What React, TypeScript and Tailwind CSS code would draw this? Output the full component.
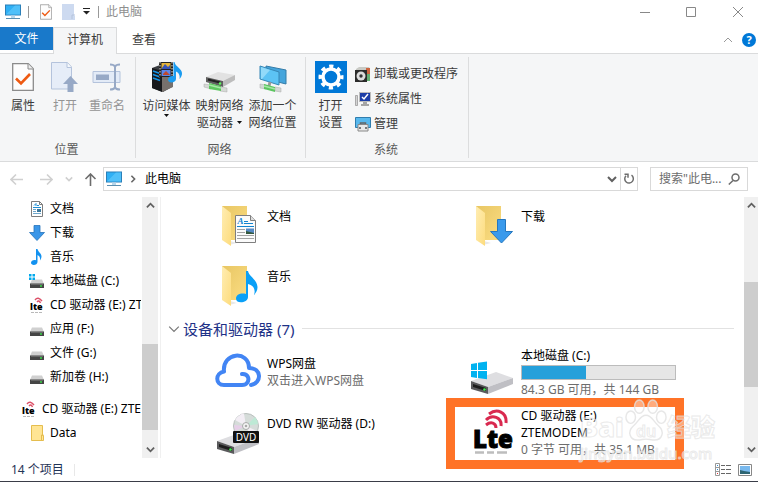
import React from 'react';

type IconProps = { className?: string };

const MonitorIcon: React.FC<IconProps> = ({ className }) => (
  <svg className={className} width="16" height="16" viewBox="0 0 16 16">
    <rect x="0.5" y="1" width="15" height="10" fill="#2fb0f5" stroke="#2b7fb8" />
    <path d="M1 10.5 10 1.5h5v9z" fill="#5cc8fb" opacity="0.7" />
    <path d="M6 11.5h4V14H6z" fill="#b9d7ea" />
    <path d="M1 14.5h14" stroke="#5c8fb0" />
  </svg>
);

const PageCheckIcon: React.FC<IconProps> = ({ className }) => (
  <svg className={className} viewBox="0 0 22 28">
    <path d="M.7.7h15.6l5 5v21.6H.7z" fill="#fdfdfd" stroke="#8b8b8b" strokeWidth="1.3" />
    <path d="M16 .7v5.3h5.3" fill="#eee" stroke="#8b8b8b" />
    <path d="m4 15.500 5 5 9-9.500" fill="none" stroke="#ee5a12" strokeWidth="2.600" />
  </svg>
);

const PageOpenIcon = () => (
  <svg width="28" height="30" viewBox="0 0 28 30">
    <path d="M.5.500h16l4 4.500v22H.5z" fill="#e6edf8" stroke="#b4c3dc" />
    <path d="M16 .5v5h4.500" fill="#f5f8fc" stroke="#b4c3dc" />
    <path d="m19.500 14 7.500 8h-4.500v8h-6v-8H12z" fill="#97a9c6" />
  </svg>
);

const RenameIcon = () => (
  <svg width="30" height="28" viewBox="0 0 30 28">
    <path d="M1 8.500h27v11H1z" fill="#e3ebf7" stroke="#b4c3dc" />
    <path d="M4 11.500h13v5.500H4z" fill="#97a9c6" />
    <path d="M23 2v24M18 1.500q4 0 5 2 1-2 5-2M18 26.500q4 0 5-2 1 2 5 2" fill="none" stroke="#97a9c6" strokeWidth="2" />
  </svg>
);

const MediaServerIcon = () => (
  <svg width="32" height="32" viewBox="0 0 32 32">
    <path d="m1 7 8-3 12 3v19l-9 5-11-4z" fill="#3a3d42" />
    <path d="m11 10 11-3v19l-11 5z" fill="#77716d" />
    <path d="m1 7 10 3v21L1 27z" fill="#17191c" />
    <path d="m2 10 7 2.500M2 13.500 9 16M2 17l7 2.500" stroke="#1593e6" strokeWidth="1.500" />
    <path d="M8 1h14v15H8z" fill="#222" />
    <path d="M10.500 2h9v6h-9z" fill="#e5b53a" />
    <path d="m11 7 3-4 3 3 2-2v4h-8z" fill="#3754b8" />
    <path d="M10.500 9h9v6h-9z" fill="#5b86e8" />
    <path d="m12 13 3-3 4 4h-7z" fill="#c0482c" />
    <path d="M9 1v15M21 1v15" stroke="#ddd" strokeDasharray="1.500 1.500" />
    <path d="M23.500 1c1 5 7 6 7.500 11 .3 2-1 4.500-2.500 6 .8-4-1-6.500-3.500-7.500V18c0 4-8 5-8 .5 0-3 3-4 5.500-3.500V1z" fill="#1a9cf0" />
  </svg>
);

const NetDriveIcon = () => (
  <svg width="34" height="32" viewBox="0 0 34 32">
    <path d="m3 16 12-5 17 3-10 6z" fill="#e2e2e2" />
    <path d="m3 16 17 4v6L3 21z" fill="#606060" />
    <path d="m20 20 12-6v5l-12 7z" fill="#bdbdbd" />
    <path d="m5 18.500 12 3" stroke="#222" strokeWidth="2" />
    <circle cx="17" cy="22.500" r="1.200" fill="#5dff5d" />
    <path d="m1 23 7 1v4l-7-2zM17 26l7 1v4l-7-1z" fill="#d5d9d5" stroke="#aaa" strokeWidth=".5" />
    <path d="m6 22 12 3v5L6 28z" fill="#5ec760" />
    <path d="m6 24 12 3" stroke="#a5e8a5" strokeWidth="1.500" />
  </svg>
);

const NetPlaceIcon = () => (
  <svg width="30" height="32" viewBox="0 0 30 32">
    <path d="m8 5 20 4v14L8 18z" fill="#45a5dc" stroke="#357ca8" />
    <path d="m2 5 19 6v13L2 18z" fill="#5cc3f4" stroke="#3787b5" />
    <path d="m3 6 9 3-8 9H3z" fill="#92daf9" />
    <path d="m12 21-1 4" stroke="#999" strokeWidth="3" />
    <path d="m2 23 6 1v4l-6-1zM17 26l6 1v4l-6-1z" fill="#d3d8d5" stroke="#aaa" strokeWidth=".5" />
    <path d="m6 23 11 3v5L6 28z" fill="#5cc560" />
    <path d="m6 25 11 3" stroke="#a5e8a5" strokeWidth="1.500" />
  </svg>
);

const GearIcon = () => (
  <svg width="32" height="32" viewBox="0 0 32 32">
    <path d="M0 0h32v32H0z" fill="#0078d7" />
    <circle cx="16" cy="16" r="8" fill="none" stroke="#fff" strokeWidth="3.500" />
    <circle cx="16" cy="16" r="10.500" fill="none" stroke="#fff" strokeWidth="4" strokeDasharray="4.120 4.120" strokeDashoffset="2.060" />
  </svg>
);

const UninstallIcon = () => (
  <svg width="16" height="16" viewBox="0 0 16 16">
    <path d="M1 3 4 1h10l1 2v12H1z" fill="#c9cac5" />
    <path d="M11 2h4v6h-4z" fill="#ce6540" />
    <path d="M12 8h3v7h-3z" fill="#65ae72" />
    <path d="M0 4h12v12H0z" fill="#2b2b2b" />
    <circle cx="6" cy="10" r="4.500" fill="#ddd" />
    <circle cx="6" cy="10" r="1.700" fill="#333" />
  </svg>
);

const SystemIcon = () => (
  <svg width="16" height="16" viewBox="0 0 16 16">
    <path d="M.5 4.500h2v10h-2z" fill="#d4d4d4" stroke="#909090" strokeWidth=".7" />
    <path d="M4 1h12v10H4z" fill="#bbb" />
    <path d="M5 2h10v8H5z" fill="#1b3ea8" />
    <path d="m7 6 2 2 4-5" fill="none" stroke="#fff" strokeWidth="1.500" />
    <path d="M8 11h4v2h2v2H6v-2h2z" fill="#a5a5a5" />
  </svg>
);

const ManageIcon = () => (
  <svg width="16" height="16" viewBox="0 0 16 16">
    <path d="M.5 1.500h15v10H.5z" fill="#57b8ed" stroke="#2f7dae" />
    <path d="M5.500 9V7h5v2" fill="none" stroke="#666" strokeWidth="1.500" />
    <path d="M3 8.500h10V15H3z" fill="#e9e9e9" stroke="#888" />
    <path d="M5 11v2M11 11v2" stroke="#555" strokeWidth="1.500" />
  </svg>
);

const DocIcon = () => (
  <svg width="16" height="16" viewBox="0 0 16 16">
    <path d="M2.500.5h8l3 3v12h-11z" fill="#fff" stroke="#7d7d7d" />
    <path d="M10.500.5v3h3" fill="none" stroke="#7d7d7d" />
    <path d="M4 6.500h8M5 4.500l2-2v2.500M8 4.500h2" fill="none" stroke="#1d8fd5" />
    <path d="M4 8.500h3M4 10.500h3M4 12.500h8" stroke="#6fa7cc" />
    <path d="M8 8h4v3H8z" fill="#39779c" />
  </svg>
);

const DownIcon = () => (
  <svg width="16" height="16" viewBox="0 0 16 16">
    <path d="M5 .5h6v7h4.500L8 15.500.5 7.500H5z" fill="#3a96e8" stroke="#2673bb" strokeWidth=".8" />
  </svg>
);

const NoteIcon = () => (
  <svg width="16" height="16" viewBox="0 0 16 16">
    <path d="M7 0h1.500c.5 3 4 4 4 7.500 0 1.500-.8 3-1.500 4 .5-3-.5-4.500-2.500-5.500V13c0 3.500-6.500 4-6.500.8 0-2 2.500-3.300 5-2.500z" fill="#1292f0" />
  </svg>
);

const DriveIcon: React.FC<{ windows?: boolean }> = ({ windows }) => (
  <svg width="16" height="16" viewBox="0 0 16 16">
    <path d="M3 6.500h10l2 4.500H1z" fill="#d0d0d0" />
    <path d="M1 10.500h14V15H1z" fill="#454545" />
    <path d="M2 11.500h12" stroke="#666" />
    <circle cx="12" cy="13" r=".9" fill="#38e948" />
    {windows && <path d="M0 1h2.500v2.500H0zM3.500 1H6v2.500H3.500zM0 4.500h2.500V7H0zM3.500 4.500H6V7H3.500z" fill="#00a8ec" />}
  </svg>
);

const SmallLteIcon = () => (
  <svg width="16" height="16" viewBox="0 0 16 16">
    <path d="M6 3q3-4 7 1M8 5q2-2.500 3.500 1" fill="none" stroke="#dc5068" strokeWidth="1.400" />
    <text x="1" y="13" className="fill-black font-black text-[9px]">lte</text>
    <path d="M2 15.500h11" stroke="#b9b9b9" strokeDasharray="3 1" />
  </svg>
);

const SmallFolderIcon = () => (
  <svg width="16" height="16" viewBox="0 0 16 16">
    <path d="M2.500.5h11v10h1v5h-12z" fill="#ffe594" stroke="#e5bd4e" />
    <path d="M12.500 15v-5h2" fill="none" stroke="#e5bd4e" />
  </svg>
);

const FolderIcon: React.FC<{ kind: 'doc' | 'down' | 'music' }> = ({ kind }) => (
  <svg width="48" height="48" viewBox="0 0 48 48">
    <defs>
      <linearGradient id="back" x1="0" x2="1" y1="0" y2="1">
        <stop offset="0" stopColor="#e8c663" />
        <stop offset="1" stopColor="#fbdd83" />
      </linearGradient>
      <linearGradient id="flap" x1="0" x2="1" y1="0" y2="1">
        <stop offset="0" stopColor="#ffedb3" />
        <stop offset="1" stopColor="#fddc7d" />
      </linearGradient>
    </defs>
    <path d="M14 44l8-2-7-2z" fill="#e8e8e8" />
    <path d="M7 5h25v34H7z" fill="url(#back)" />
    <path d="m7 5 9 7v33l-9-6z" fill="url(#flap)" />
    {kind === 'doc' && (
      <>
        <path d="M20.500 14.500h15l5 5v22h-20z" fill="#fbfbfb" stroke="#7f7f7f" />
        <path d="M35.500 14.500v5h5" fill="#ddd" stroke="#7f7f7f" />
        <text x="22.500" y="23" className="fill-[#1384d0] font-['Liberation_Serif'] text-[9px] font-bold italic">A</text>
        <path d="M29 20.500h4M29 22.500h9M22 25.500h17" stroke="#1384d0" />
        <path d="M22 28.500h8M22 31.500h8M22 34.500h17M22 37.500h17" stroke="#a3a3a3" />
        <path d="M31 27.500h8v5.500h-8z" fill="#5589c5" />
        <path d="M31 33v-3l8 2v1z" fill="#34583e" />
      </>
    )}
    {kind === 'down' && <path d="M28.500 18.500h8v12h7L32.500 42l-11-11.500h7z" fill="#3a9aec" stroke="#2577bf" />}
    {kind === 'music' && (
      <path d="M31 10h2c1 6 9 8 9.500 16 .1 3-1.500 6-3.500 8 2-6-1-10-6-11v13c0 6-12 7.500-12 1.500 0-4 5-6 10-4.500z" fill="#0aa0f7" />
    )}
  </svg>
);

const CloudIcon = () => (
  <svg width="48" height="48" viewBox="0 0 48 48">
    <path
      d="M27 26c6-.5 8 5 5 9-1 1.500-3 2-5 2H9C0 37 0 25 9 23.500 7 4 34 2 34 20c13 0 13 15 2 17"
      fill="none"
      stroke="#4285f4"
      strokeWidth="4"
      strokeLinecap="round"
      strokeLinejoin="round"
    />
  </svg>
);

const BigDriveBody = () => (
  <>
    <path d="m2 33 25-9 17 6-25 9z" fill="#dedee1" />
    <path d="m2 33 17 6v7L2 41z" fill="#5a5a5c" />
    <path d="m19 39 25-9v6l-25 10z" fill="#bfbfc4" />
    <path d="m4 36 13 4v3L4 39z" fill="#1c1c1c" />
    <circle cx="15.500" cy="41.500" r="1.300" fill="#3df04e" />
  </>
);

const DvdIcon = () => (
  <svg width="48" height="48" viewBox="0 0 48 48">
    <BigDriveBody />
    <circle cx="31" cy="18" r="12.500" fill="#d5dcd9" stroke="#b9bfbd" />
    <path d="M31 18 20 12q4-6 9-6.500zM31 18l11 5q-3 5-6 6z" fill="#f3eef5" />
    <path d="m31 18 9-9q3 4 3 7z" fill="#bde9d5" />
    <path d="m31 18-11 5-1-6z" fill="#e6cfe8" />
    <circle cx="31" cy="18" r="3.500" fill="#f5f5f5" stroke="#aaa" />
    <circle cx="31" cy="18" r="1.300" fill="#aaa" />
    <rect x="18" y="23" width="26" height="12" rx="1" fill="#111" />
    <text x="31" y="32.500" textAnchor="middle" className="fill-white text-[10px]">DVD</text>
  </svg>
);

const LocalDiskIcon = () => (
  <svg width="48" height="48" viewBox="0 0 48 48">
    <BigDriveBody />
    <path d="m2 16 6-1v7H2zM9 14.800l9-1.300V22H9zM2 23h6v7l-6-1zM9 23h9v8.300L9 30z" fill="#00b2f0" />
  </svg>
);

const LteIcon = () => (
  <svg width="48" height="48" viewBox="0 0 48 48">
    <path d="M20 6c8-6 18-2 17 9M17 12c6-6 16-3 15 6M17 17c5-4 10-2 10 3" fill="none" stroke="#d9294f" strokeWidth="3" />
    <text x="4" y="40" className="fill-black stroke-black stroke-1 font-['Open_Sans'] font-black text-[24px]">Lte</text>
    <path d="M6 44.500h9M18 44.500h7M28 44.500h10" stroke="#bdbdbd" strokeWidth="2.500" />
  </svg>
);

const Chevron: React.FC<{ dir: 'up' | 'down' | 'right'; className?: string }> = ({ dir, className }) => {
  const paths = { up: 'm1 7 4-4 4 4', down: 'm1 3 4 4 4-4', right: 'm3 1 4 4-4 4' };
  return (
    <svg className={className} width="10" height="10" viewBox="0 0 10 10" fill="none" stroke="currentColor">
      <path d={paths[dir]} />
    </svg>
  );
};

const Caret = () => (
  <svg width="5" height="3" viewBox="0 0 5 3" className="inline-block">
    <path d="M0 0h5L2.500 3z" fill="#111" />
  </svg>
);

const ArrowIcon: React.FC<IconProps> = ({ className }) => (
  <svg className={className} width="13" height="13" viewBox="0 0 13 13" fill="none" stroke="currentColor" strokeWidth="1.600">
    <path d="M13 6.500H1M6 1.500l-5 5 5 5" />
  </svg>
);

const RibbonButton: React.FC<{ icon: React.ReactNode; width: string; disabled?: boolean; children: React.ReactNode }> = ({
  icon, width, disabled, children,
}) => (
  <button disabled={disabled} className={`flex flex-col items-center gap-1 text-[#3b3b3b] disabled:text-[#949494] ${width}`}>
    <span className="flex h-8 items-center justify-center">{icon}</span>
    <span className="whitespace-nowrap leading-[17px]">{children}</span>
  </button>
);

const RibbonGroup: React.FC<{ label: string; className?: string; children: React.ReactNode }> = ({ label, className, children }) => (
  <section className={`my-[3px] flex flex-col justify-between border-r border-[#dcddde] pt-1 ${className}`}>
    <div className="flex items-start">{children}</div>
    <h2 className="pr-0.5 text-center leading-4 text-[#5a5a5a]">{label}</h2>
  </section>
);

const ScrollBar: React.FC<{ className: string; thumb: string }> = ({ className, thumb }) => (
  <div className={`flex shrink-0 flex-col items-center bg-[#f0f0f0] text-[#606060] ${className}`}>
    <Chevron dir="up" className="my-1 h-[9px] w-[9px] shrink-0 stroke-2" />
    <div className="flex w-full flex-1 flex-col">
      <div className={`w-full bg-[#cdcdcd] ${thumb}`} />
    </div>
    <Chevron dir="down" className="my-1 h-[9px] w-[9px] shrink-0 stroke-2" />
  </div>
);

const treeItems = [
  { label: '文档', icon: <DocIcon /> },
  { label: '下载', icon: <DownIcon /> },
  { label: '音乐', icon: <NoteIcon /> },
  { label: '本地磁盘 (C:)', icon: <DriveIcon windows /> },
  { label: 'CD 驱动器 (E:) ZTEMODEM', icon: <SmallLteIcon /> },
  { label: '应用 (F:)', icon: <DriveIcon /> },
  { label: '文件 (G:)', icon: <DriveIcon /> },
  { label: '新加卷 (H:)', icon: <DriveIcon /> },
];

const TreeItem: React.FC<{ label: string; icon: React.ReactNode; className?: string }> = ({ label, icon, className = 'pl-[29px]' }) => (
  <li className={`flex h-6 shrink-0 items-center gap-[5px] whitespace-nowrap ${className}`}>
    <span className="shrink-0">{icon}</span>
    {label}
  </li>
);

const Tile: React.FC<{ icon: React.ReactNode; title: string; children?: React.ReactNode }> = ({ icon, title, children }) => (
  <div className="relative flex h-[60px] items-center gap-1">
    <span className="shrink-0">{icon}</span>
    <div className="min-h-[34px] whitespace-nowrap leading-[17px]">
      <p>{title}</p>
      {children}
    </div>
  </div>
);

const Watermark = () => (
  <div className="pointer-events-none absolute right-[26px] top-[204px] w-[136px] font-black text-white/40 [-webkit-text-stroke:1px_rgba(225,225,225,0.7)]">
    <div className="flex h-11 items-end">
      <span className="w-[45px] text-[27px] leading-8">Bai</span>
      <span className="relative flex h-11 w-[42px] shrink-0 items-end justify-center">
        <svg
          className="absolute inset-0"
          width="42"
          height="42"
          viewBox="0 0 44 44"
          fill="#fff"
          fillOpacity="0.4"
          stroke="#e1e1e1"
          strokeOpacity="0.8"
          strokeWidth="1.500"
        >
          <ellipse cx="6" cy="19" rx="5" ry="6.500" />
          <ellipse cx="15" cy="8" rx="5" ry="7" />
          <ellipse cx="29" cy="8" rx="5" ry="7" />
          <ellipse cx="38" cy="19" rx="5" ry="6.500" />
          <path d="M22 17c6 0 8 7 13 11 7 6 4 15-4 15-4 0-6-1-9-1s-5 1-9 1c-8 0-11-9-4-15 5-4 7-11 13-11z" />
        </svg>
        <span className="relative text-base font-semibold leading-6">du</span>
      </span>
      <span className="whitespace-nowrap text-2xl leading-8">经验</span>
    </div>
    <p className="text-[15px] font-medium leading-5">jingyan.baidu.com</p>
  </div>
);

const App: React.FC = () => {
  return (
    <div className="flex h-screen flex-col border-b border-[#3a3d48] bg-white font-['Noto_Sans','Noto_Sans_CJK_SC',sans-serif] text-xs text-black">
      <header className="flex h-[27px] shrink-0 items-center pb-1 pl-[5px] pr-[14px] text-[#8f8f8f]">
        <MonitorIcon />
        <span className="ml-[7px] h-3 w-px bg-[#999]" />
        <PageCheckIcon className="ml-[11px] h-4 w-3" />
        <svg className="ml-[10px]" width="13" height="16" viewBox="0 0 13 16">
          <path d="M0 0h12v12h1v4H0z" fill="#cddaf0" />
          <path d="M10 15v-4h3" fill="none" stroke="#b4c3dc" />
        </svg>
        <svg className="ml-2" width="7" height="7" viewBox="0 0 7 7">
          <path d="M0 .5h7" stroke="#222" />
          <path d="M0 3h7L3.500 6.500z" fill="#222" />
        </svg>
        <span className="ml-2 h-3 w-px bg-[#999]" />
        <h1 className="ml-[7px]">此电脑</h1>
        <div className="ml-auto flex items-center gap-9">
          <button aria-label="最小化"><svg width="10" height="10" viewBox="0 0 10 10"><path d="M0 5.500h10" stroke="#888" /></svg></button>
          <button aria-label="最大化"><svg width="10" height="10" viewBox="0 0 10 10"><path d="M.5.5h9v9h-9z" fill="none" stroke="#888" /></svg></button>
          <button aria-label="关闭"><svg width="12" height="12" viewBox="0 0 12 12"><path d="m1 1 10 10M11 1 1 11" stroke="#888" /></svg></button>
        </div>
      </header>

      <nav className="flex h-[26px] shrink-0 items-start pr-[2px] text-[#3b3b3b]">
        <button className="h-[23px] w-[53px] bg-[#1979ca] text-white">文件</button>
        <button className="relative z-10 h-[27px] w-16 border border-b-0 border-[#dadbdc] bg-[#f5f6f7] pb-0.5">计算机</button>
        <button className="h-[25px] w-[54px]">查看</button>
        <div className="ml-auto flex h-[26px] items-center gap-[9px] text-[#999]">
          <button aria-label="折叠功能区"><Chevron dir="up" /></button>
          <button aria-label="帮助" className="h-[14px] w-[14px] rounded-full bg-[#0078d7] text-center text-[11px] font-bold leading-[14px] text-white">?</button>
        </div>
      </nav>

      <div className="flex h-[109px] shrink-0 border-y border-[#dadbdc] bg-[#f5f6f7]">
        <RibbonGroup label="位置" className="w-[136px]">
          <RibbonButton width="w-[46px]" icon={<PageCheckIcon className="h-7 w-[22px]" />}>属性</RibbonButton>
          <RibbonButton width="w-[38px]" disabled icon={<PageOpenIcon />}>打开</RibbonButton>
          <RibbonButton width="w-[46px]" disabled icon={<RenameIcon />}>重命名</RibbonButton>
        </RibbonGroup>
        <RibbonGroup label="网络" className="w-[170px] pl-1 pr-1">
          <RibbonButton width="w-[53px]" icon={<MediaServerIcon />}>
            访问媒体
            <span className="flex justify-center"><Caret /></span>
          </RibbonButton>
          <RibbonButton width="w-[53px]" icon={<NetDriveIcon />}>
            映射网络
            <span className="flex items-center justify-center gap-1">驱动器<Caret /></span>
          </RibbonButton>
          <RibbonButton width="w-[53px]" icon={<NetPlaceIcon />}>添加一个<br />网络位置</RibbonButton>
        </RibbonGroup>
        <RibbonGroup label="系统" className="w-[163px] pl-1 pr-1">
          <RibbonButton width="w-[41px]" icon={<GearIcon />}>打开<br />设置</RibbonButton>
          <div className="ml-1 flex flex-col text-[#3b3b3b]">
            <button className="flex h-[25px] items-center gap-[3px] whitespace-nowrap"><UninstallIcon />卸载或更改程序</button>
            <button className="flex h-[25px] items-center gap-[3px] whitespace-nowrap"><SystemIcon />系统属性</button>
            <button className="flex h-[25px] items-center gap-[3px] whitespace-nowrap"><ManageIcon />管理</button>
          </div>
        </RibbonGroup>
      </div>

      <div className="flex h-[35px] shrink-0 items-start pl-[10px] pr-[10px] pt-[5px]">
        <div className="flex h-6 w-[93px] items-center text-[#d0d0d0]">
          <button aria-label="后退"><ArrowIcon /></button>
          <button aria-label="前进" className="ml-[17px]"><ArrowIcon className="rotate-180" /></button>
          <button aria-label="最近" className="ml-3"><Chevron dir="down" className="h-2 w-2 stroke-2" /></button>
          <button aria-label="上移" className="ml-[11px] text-[#6d6d6d]"><ArrowIcon className="rotate-90" /></button>
        </div>
        <div className="flex h-6 flex-1 items-center border border-[#d9d9d9] pl-0.5">
          <MonitorIcon />
          <Chevron dir="right" className="ml-[7px] h-2 w-2 stroke-2 text-[#666]" />
          <span className="ml-2">此电脑</span>
          <button aria-label="历史" className="ml-auto mr-[3px] text-[#606060]"><Chevron dir="down" className="stroke-2" /></button>
          <button aria-label="刷新" className="flex h-full w-[17px] items-center justify-center border-l border-[#d9d9d9]">
            <svg width="12" height="12" viewBox="0 0 12 12" fill="none" stroke="#6d6d6d" strokeWidth="1.500">
              <path d="M8.500 2.200a4.300 4.300 0 1 1-5.500.5M1.500 1.200h3.500v3.500" />
            </svg>
          </button>
        </div>
        <label className="ml-3 flex h-6 w-[98px] items-center border border-[#d9d9d9] pl-2 pr-[7px]">
          <input aria-label="搜索" placeholder={'搜索"此电...'} className="w-0 min-w-0 flex-1 outline-none placeholder:text-[#6d6d6d]" />
          <svg width="12" height="12" viewBox="0 0 12 12" fill="none" stroke="#6d6d6d" strokeWidth="1.500">
            <circle cx="7.500" cy="4.500" r="3.500" />
            <path d="M5 7.500.8 11.500" />
          </svg>
        </label>
      </div>

      <div className="flex min-h-0 flex-1">
        <aside className="flex w-[161px] shrink-0 border-r border-[#f0f0f0] pr-[2px]">
          <ul className="mr-px flex min-w-0 flex-1 flex-col overflow-hidden">
            {treeItems.map((item) => <TreeItem key={item.label} {...item} />)}
            <TreeItem label="CD 驱动器 (E:) ZTEMODEM" icon={<SmallLteIcon />} className="mt-2 pl-[21px]" />
            <TreeItem label="Data" icon={<SmallFolderIcon />} />
          </ul>
          <ScrollBar className="w-4" thumb="mt-auto mb-[11px] h-[86px]" />
        </aside>

        <main className="relative z-10 -mt-0.5 min-w-0 flex-1">
          <div className="grid grid-cols-[254px_1fr] pl-[54px]">
            <Tile icon={<FolderIcon kind="doc" />} title="文档" />
            <Tile icon={<FolderIcon kind="down" />} title="下载" />
            <Tile icon={<FolderIcon kind="music" />} title="音乐" />
          </div>
          <h2 className="flex h-[27px] items-center pl-[7px] pr-2 text-[15px] text-[#1e3287]">
            <Chevron dir="down" className="h-3 w-3 text-[#777]" />
            <span className="ml-[3px]">设备和驱动器 (7)</span>
            <span className="ml-2 h-px flex-1 bg-[#e2e2e2]" />
          </h2>
          <div className="grid grid-cols-[254px_1fr] pl-[54px]">
            <Tile icon={<CloudIcon />} title="WPS网盘">
              <p className="text-[#6d6d6d]">双击进入WPS网盘</p>
            </Tile>
            <Tile icon={<LocalDiskIcon />} title="本地磁盘 (C:)">
              <div className="my-px h-[15px] w-[155px] border border-[#bcbcbc] bg-[#e6e6e6]">
                <div className="h-full w-[42%] bg-[#26a0da]" />
              </div>
              <p className="text-[#6d6d6d]">84.3 GB 可用，共 144 GB</p>
            </Tile>
            <Tile icon={<DvdIcon />} title="DVD RW 驱动器 (D:)" />
            <Tile icon={<LteIcon />} title="CD 驱动器 (E:)">
              <p>ZTEMODEM</p>
              <p className="text-[#6d6d6d]">0 字节 可用，共 35.1 MB</p>
              <div className="absolute -left-[23px] -top-1 h-[71px] w-[238px] border-[9px] border-[#ff7327]" />
            </Tile>
          </div>
          <Watermark />
        </main>
        <ScrollBar className="ml-[2px] w-[14px]" thumb="mt-[68px] h-[105px]" />
      </div>

      <footer className="flex h-[23px] shrink-0 items-center pl-[11px] pr-[6px] text-[#1f3356]">
        <span>14 个项目</span>
        <span className="ml-[10px] h-3 w-px bg-[#e8e8e8]" />
        <button aria-label="详细信息" className="ml-auto">
          <svg width="16" height="14" viewBox="0 0 16 14" fill="none">
            <path d="M.5.500h4v12h-4zM.5 4.500h4M.5 8.500h4" stroke="#999" />
            <path d="M6 2.500h4M11 2.500h5M6 6.500h4M11 6.500h5M6 10.500h4M11 10.500h5" stroke="#666" />
            <path d="M2 2.500h1M2 6.500h1" stroke="#2e8bd0" />
            <path d="M2 10.500h1" stroke="#d33" />
          </svg>
        </button>
        <button aria-label="大图标" className="ml-[7px]">
          <svg width="14" height="12" viewBox="0 0 14 12">
            <path d="M.5.5h13v11H.5z" fill="#fff" stroke="#888" />
            <path d="M2 2h10v8H2z" fill="#79b9ee" />
            <path d="m2 6 4 1 6 1v2H2z" fill="#2c6472" />
          </svg>
        </button>
      </footer>
    </div>
  );
};

export default App;
